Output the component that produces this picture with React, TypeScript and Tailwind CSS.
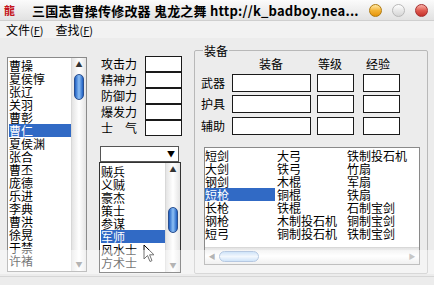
import React from 'react';

const heroes = ['曹操', '夏侯惇', '张辽', '关羽', '曹彰', '曹仁', '夏侯渊', '张合', '曹丕', '庞德', '乐进', '李典', '曹洪', '徐晃', '于禁', '许褚'];
const jobs = ['贼兵', '义贼', '豪杰', '策士', '参谋', '军师', '风水士', '方术士'];
const attrs = ['攻击力', '精神力', '防御力', '爆发力', '士　气'];
const items = [
  ['短剑', '大弓', '铁制投石机'],
  ['大剑', '铁弓', '竹扇'],
  ['钢剑', '木棍', '军扇'],
  ['短枪', '铜棍', '铁扇'],
  ['长枪', '铁棍', '石制宝剑'],
  ['钢枪', '木制投石机', '铜制宝剑'],
  ['短弓', '铜制投石机', '铁制宝剑'],
];

function VScroll({ thumbTop }: { thumbTop: string }) {
  return (
    <div className="w-[15px] h-full flex flex-col items-center bg-gradient-to-r from-[#e4e4e4] via-white to-[#e4e4e4] border-l border-[#d8d8d8]">
      <div className="h-[12px] flex items-center justify-center text-[7px] text-[#333]">▲</div>
      <div className={`${thumbTop} w-[10px] h-[26px] rounded-full bg-gradient-to-r from-[#1d5fc2] via-[#8ec0f5] to-[#1d5fc2] border border-[#2a4f8f]`} />
      <div className="flex-1" />
      <div className="h-[14px] flex items-center justify-center text-[7px] text-[#777]">▼</div>
    </div>
  );
}

function Box({ className }: { className: string }) {
  return <div className={`bg-white border border-[#1a1a1a] ${className}`} />;
}

export default function App() {
  return (
    <div className="relative w-[434px] h-[285px] overflow-hidden bg-[#ececec] text-black font-['Noto_Sans_CJK_SC','Noto_Sans',sans-serif] text-[12px]">
      {/* Title bar */}
      <div className="h-[21px] flex items-center bg-gradient-to-b from-[#fbfbfb] to-[#e2e2e2] border-b border-[#cfcfcf]">
        <span className="ml-[4px] w-[14px] text-[11px] leading-none font-bold text-[#c4141c]">龍</span>
        <span className="ml-[14px] text-[13px] font-bold leading-none tracking-[0.2px]">三国志曹操传修改器 鬼龙之舞 http://k_badboy.nea...</span>
        <div className="ml-auto mr-[6px] flex gap-[10px]">
          <div className="w-[13px] h-[13px] rounded-full border border-[#b07a10] bg-gradient-to-b from-[#ffe9a0] via-[#f3b433] to-[#e69400]" />
          <div className="w-[13px] h-[13px] rounded-full border border-[#b8b8b8] bg-gradient-to-b from-white via-[#e8e8e8] to-[#d6d6d6]" />
          <div className="w-[13px] h-[13px] rounded-full border border-[#a53030] bg-gradient-to-b from-[#f7b0a8] via-[#e05a50] to-[#c4302a]" />
        </div>
      </div>

      {/* Menu bar */}
      <div className="h-[17px] flex items-center gap-[12px] pl-[6px] bg-[#f2f2f2] leading-none">
        <span>文件<span className="text-[11px]">(<span className="underline">F</span>)</span></span>
        <span>查找<span className="text-[11px]">(<span className="underline">F</span>)</span></span>
      </div>

      {/* Body */}
      <div className="flex pl-[7px] pt-[12px] gap-[12px]">
        {/* Hero list */}
        <div className="mt-[7px] w-[80px] h-[215px] bg-white border border-[#8a8a8a] flex">
          <div className="flex-1 pt-[1px] pl-[1px]">
            {heroes.map((h) => (
              <div key={h} className={`h-[13px] leading-[13px] ${h === '曹仁' ? 'bg-[#316ac5] text-white' : ''}`}>{h}</div>
            ))}
          </div>
          <VScroll thumbTop="mt-[4px]" />
        </div>

        {/* Attributes + job */}
        <div className="w-[83px] flex flex-col">
          <div className="mt-[6px] flex flex-col gap-[1px]">
            {attrs.map((a) => (
              <div key={a} className="flex items-center h-[15px]">
                <span className="w-[46px] pl-[2px] leading-none">{a}</span>
                <Box className="w-[37px] h-[16px]" />
              </div>
            ))}
          </div>
          <div className="mt-[11px] ml-[1px] w-[79px] h-[16px] bg-white border border-[#555] flex items-center justify-end pr-[3px] text-[8px]">▼</div>
          <div className="w-[82px] h-[111px] bg-white border border-[#333] flex">
            <div className="flex-1 pt-[2px] pl-[1px]">
              {jobs.map((j) => (
                <div key={j} className={`h-[13px] leading-[13px] ${j === '军师' ? 'bg-[#316ac5] text-white' : ''}`}>{j}</div>
              ))}
            </div>
            <VScroll thumbTop="mt-[32px]" />
          </div>
        </div>

        {/* Equipment group */}
        <fieldset className="w-[234px] h-[230px] border border-[#b8b8b8] rounded-[2px] px-[6px] pb-[6px] -mt-[6px]">
          <legend className="ml-[2px] px-[1px] leading-[13px]">装备</legend>
          <div className="flex h-[14px] items-center leading-none">
            <span className="ml-[58px]">装备</span>
            <span className="ml-[35px]">等级</span>
            <span className="ml-[24px]">经验</span>
          </div>
          <div className="mt-[3px] flex flex-col gap-[3px]">
            {['武器', '护具', '辅助'].map((r, i) => (
              <div key={r} className={`flex items-center gap-[6px] ${i === 2 ? 'mt-[1px]' : ''}`}>
                <span className="w-[25px] leading-none">{r}</span>
                <Box className="w-[79px] h-[18px]" />
                <Box className="w-[37px] h-[18px]" />
                <Box className="w-[37px] h-[18px] ml-[3px]" />
              </div>
            ))}
          </div>
          <div className="mt-[12px] ml-[3px] w-[216px] h-[118px] bg-white border border-[#8a8a8a] flex flex-col">
            <div className="flex-1 pt-[1px]">
              {items.map((row) => (
                <div key={row[0]} className="flex h-[13px] leading-[13px]">
                  <span className={`w-[70px] ${row[0] === '短枪' ? 'bg-[#316ac5] text-white' : ''}`}>{row[0]}</span>
                  <span className="w-[72px] pl-[2px]">{row[1]}</span>
                  <span>{row[2]}</span>
                </div>
              ))}
            </div>
            <div className="h-[17px] flex items-center bg-gradient-to-b from-[#e4e4e4] via-white to-[#e4e4e4] border-t border-[#d8d8d8]">
              <span className="w-[14px] text-center text-[7px] text-[#777]">◀</span>
              <div className="w-[40px] h-[11px] rounded-full bg-gradient-to-b from-[#a9cdf3] via-[#e8f2fc] to-[#a9cdf3] border border-[#7a9cc8]" />
              <div className="flex-1" />
              <span className="w-[14px] text-center text-[7px] text-[#999]">▶</span>
            </div>
          </div>
        </fieldset>
      </div>

      {/* mouse pointer */}
      <svg className="absolute left-[143px] top-[244px]" width="12" height="19" viewBox="0 0 12 19">
        <path d="M1 1 L1 15 L4.5 11.5 L7 17.5 L9 16.6 L6.6 10.8 L11 10.8 Z" fill="white" stroke="black" strokeWidth="1" strokeLinejoin="round" />
      </svg>

      {/* washed-out band at the bottom */}
      <div className="absolute left-0 top-[250px] w-[434px] h-[24px] bg-white/45" />
      <div className="absolute left-0 top-[276px] w-[434px] h-px bg-[#d6d6d6]" />
    </div>
  );
}
